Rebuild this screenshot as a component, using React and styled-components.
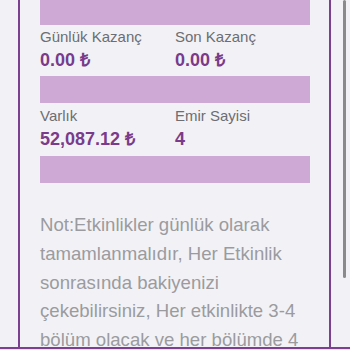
import styled, { createGlobalStyle } from 'styled-components'

const stats = [
  [
    { label: 'Günlük Kazanç', value: '0.00 ₺' },
    { label: 'Son Kazanç', value: '0.00 ₺' },
  ],
  [
    { label: 'Varlık', value: '52,087.12 ₺' },
    { label: 'Emir Sayisi', value: '4' },
  ],
]

const note = 'Not:Etkinlikler günlük olarak tamamlanmalıdır, Her Etkinlik sonrasında bakiyenizi çekebilirsiniz, Her etkinlikte 3-4 bölüm olacak ve her bölümde 4 sipariş olacaktır.'

export const App = () => (
  <>
    <GlobalStyle />
    <Page>
      <Main>
        <Card>
          <Bar $first />
          {stats.map((row, i) => (
            <Section key={i}>
              <StatGrid $second={i > 0}>
                {row.map((stat) => (
                  <Stat key={stat.label}>
                    <Label>{stat.label}</Label>
                    <Value>{stat.value}</Value>
                  </Stat>
                ))}
              </StatGrid>
              <Bar />
            </Section>
          ))}
          <Note>{note}</Note>
        </Card>
        <Scrollbar />
      </Main>
      <Footer />
    </Page>
  </>
)

const GlobalStyle = createGlobalStyle`
  html, body {
    margin: 0;
    padding: 0;
    background: #f2f2f6;
    font-family: "Liberation Sans", Arial, sans-serif;
  }
`

const Page = styled.div`
  width: 350px;
  height: 350px;
  display: flex;
  flex-direction: column;
  overflow: hidden;
  background: #f2f2f6;
`

const Main = styled.div`
  position: relative;
  flex: 1;
  overflow: hidden;
`

const Card = styled.div`
  box-sizing: border-box;
  margin-left: 18px;
  width: 313px;
  height: 100%;
  padding: 0 19px 0 20px;
  border-left: 2px solid #7d3f8f;
  border-right: 2px solid #7d3f8f;
`

const Section = styled.div`
  display: flex;
  flex-direction: column;
`

const Bar = styled.div`
  height: ${({ $first }) => ($first ? '25px' : '27px')};
  background: #cfa9d6;
`

const StatGrid = styled.div`
  display: grid;
  grid-template-columns: 135px 135px;
  padding: ${({ $second }) => ($second ? '4px 0 6px' : '3px 0 5px')};
`

const Stat = styled.div`
  display: flex;
  flex-direction: column;
  gap: 3px;
`

const Label = styled.div`
  font-size: 15px;
  line-height: 18px;
  color: #6d6d72;
`

const Value = styled.div`
  font-size: 18px;
  line-height: 22px;
  font-weight: bold;
  color: #7a3b8b;
`

const Note = styled.p`
  margin: 28px 0 0;
  font-size: 18.6px;
  line-height: 28.75px;
  color: #9b9b9f;
`

const Scrollbar = styled.div`
  position: absolute;
  top: 0;
  right: 4px;
  width: 3px;
  height: 278px;
  border-radius: 2px;
  background: #8a8a8c;
`

const Footer = styled.div`
  height: 1px;
  border-top: 2px solid #7d3f8f;
  background: #e6e0ea;
`

export default App
